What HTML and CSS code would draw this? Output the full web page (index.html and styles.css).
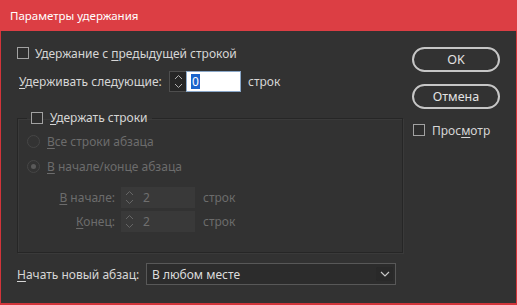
FILE: index.html
```html
<!DOCTYPE html>
<html lang="ru">
<head>
  <meta charset="UTF-8">
  <meta name="viewport" content="width=device-width, initial-scale=1.0">
  <title>Параметры удержания</title>
  <link rel="stylesheet" href="styles.css">
</head>
<body>
<div class="window">
  <div class="titlebar">Параметры удержания</div>

  <div class="content">
    <div class="main">
      <label class="row check-row">
        <span class="checkbox"></span>
        <span>Удержание с <u>п</u>редыдущей строкой</span>
      </label>

      <div class="row keep-row">
        <span class="keep-label"><u>У</u>держивать следующие:</span>
        <div class="spinner">
          <span class="arrows">
            <svg width="9" height="17" viewBox="0 0 9 17"><path d="M1 6 L4.5 2.5 L8 6 M1 11 L4.5 14.5 L8 11" fill="none" stroke="#b0b0b0" stroke-width="1"/></svg>
          </span>
          <span class="value"><span class="selected">0</span></span>
        </div>
        <span class="unit">строк</span>
      </div>

      <fieldset class="group">
        <legend class="legend">
          <span class="checkbox"></span>
          <span><u>У</u>держать строки</span>
        </legend>

        <div class="radio-row disabled">
          <span class="radio"></span>
          <span><u>В</u>се строки абзаца</span>
        </div>
        <div class="radio-row disabled second">
          <span class="radio on"></span>
          <span><u>В</u> начале/конце абзаца</span>
        </div>

        <div class="spin-row disabled first">
          <span class="spin-label"><u>В</u> начале:</span>
          <div class="spinner off">
            <span class="arrows">
              <svg width="9" height="17" viewBox="0 0 9 17"><path d="M1 6 L4.5 2.5 L8 6 M1 11 L4.5 14.5 L8 11" fill="none" stroke="#666" stroke-width="1"/></svg>
            </span>
            <span class="value">2</span>
          </div>
          <span class="unit">строк</span>
        </div>
        <div class="spin-row disabled">
          <span class="spin-label"><u>К</u>онец:</span>
          <div class="spinner off">
            <span class="arrows">
              <svg width="9" height="17" viewBox="0 0 9 17"><path d="M1 6 L4.5 2.5 L8 6 M1 11 L4.5 14.5 L8 11" fill="none" stroke="#666" stroke-width="1"/></svg>
            </span>
            <span class="value">2</span>
          </div>
          <span class="unit">строк</span>
        </div>
      </fieldset>

      <div class="row select-row">
        <span class="select-label"><u>Н</u>ачать новый абзац:</span>
        <div class="select">
          <span>В любом месте</span>
          <span class="chevron">
            <svg width="10" height="6" viewBox="0 0 10 6"><path d="M1 1 L5 5 L9 1" fill="none" stroke="#c8c8c8" stroke-width="1.2"/></svg>
          </span>
        </div>
      </div>
    </div>

    <div class="side">
      <button class="btn">OK</button>
      <button class="btn">Отмена</button>
      <label class="row preview">
        <span class="checkbox"></span>
        <span>Прос<u>м</u>отр</span>
      </label>
    </div>
  </div>
</div>
</body>
</html>
```

FILE: styles.css
```css
html, body {
  margin: 0;
  padding: 0;
  background: #323232;
}
.window {
  width: 517px;
  height: 305px;
  box-sizing: border-box;
  border: 1px solid #d2343a;
  border-top: none;
  border-bottom-width: 2px;
  background: #323232;
  font-family: "Noto Sans", "Open Sans", sans-serif;
  font-size: 12px;
  color: #d6d6d6;
  white-space: nowrap;
}
.titlebar {
  height: 31px;
  line-height: 31px;
  margin: 0 -1px;
  padding-left: 10px;
  background: #dc3e44;
  color: #fff;
  font-size: 11.5px;
}
u {
  text-decoration: underline;
  text-underline-offset: 2px;
}
.content {
  display: flex;
  padding: 13px 15px 0 16px;
}
.main {
  width: 386px;
}
.row {
  display: flex;
  align-items: center;
}
.check-row {
  height: 18px;
  gap: 6px;
}
.checkbox {
  width: 10px;
  height: 10px;
  border: 1px solid #a2a2a2;
  background: #2e2e2e;
  flex: none;
}
.keep-row {
  margin-top: 8px;
  height: 22px;
}
.keep-label {
  width: 150px;
  padding-left: 2px;
}
.spinner {
  display: flex;
  height: 21px;
  box-sizing: border-box;
}
.spinner .arrows {
  width: 17px;
  display: flex;
  align-items: center;
  justify-content: center;
  background: #262626;
  border: 1px solid #4e4e4e;
  border-right: none;
  box-sizing: border-box;
}
.spinner .value {
  width: 55px;
  background: #fff;
  border: 1px solid #8aa7c8;
  box-sizing: border-box;
  padding-left: 4px;
  display: flex;
  align-items: center;
  color: #000;
}
.selected {
  background: #1a64cc;
  color: #fff;
  padding: 0 1px;
  line-height: 15px;
}
.unit {
  margin-left: 7px;
}
.group {
  margin: 18px 0 0;
  padding: 0 0 0 9px;
  height: 143px;
  box-sizing: border-box;
  border: 1px solid #262626;
  box-shadow: 1px 1px 0 #3a3a3a, inset 1px 1px 0 #3a3a3a;
}
.legend {
  display: flex;
  align-items: center;
  gap: 7px;
  padding: 0 4px;
  line-height: 16px;
  margin-left: 0;
}
.disabled {
  color: #6c6c6c;
}
.radio-row {
  display: flex;
  align-items: center;
  gap: 7px;
  height: 20px;
  margin-top: 5px;
}
.radio {
  width: 11px;
  height: 11px;
  border: 1px solid #464646;
  border-radius: 50%;
  background: #333;
  position: relative;
  flex: none;
}
.radio.on::after {
  content: "";
  position: absolute;
  left: 3px;
  top: 3px;
  width: 5px;
  height: 5px;
  border-radius: 50%;
  background: #5a5a5a;
}
.spin-row {
  display: flex;
  align-items: center;
  height: 21px;
  margin-top: 3px;
}
.spin-row.first {
  margin-top: 11px;
}
.spin-label {
  width: 88px;
  text-align: right;
}
.spinner.off {
  margin-left: 6px;
  width: 74px;
  background: #393939;
}
.spinner.off .arrows {
  width: 16px;
  background: transparent;
  border: none;
}
.spinner.off .value {
  flex: 1;
  background: transparent;
  border: none;
  color: #6f6f6f;
  padding-left: 6px;
}
.spin-row .unit {
  margin-left: 8px;
}
.select-row {
  margin-top: 10px;
  height: 22px;
}
.select-label {
  width: 129px;
}
.select {
  width: 250px;
  height: 22px;
  box-sizing: border-box;
  border: 1px solid #585858;
  background: #2c2c2c;
  display: flex;
  align-items: center;
  justify-content: space-between;
  padding: 0 2px 0 5px;
  color: #dcdcdc;
}
.chevron {
  width: 17px;
  height: 14px;
  display: flex;
  align-items: center;
  justify-content: center;
  background: #292929;
  border-radius: 2px;
}
.side {
  margin-left: 9px;
  width: 88px;
  padding-top: 3px;
  display: flex;
  flex-direction: column;
}
.btn {
  height: 25px;
  border: 2px solid #c6c6c6;
  border-radius: 13px;
  background: transparent;
  color: #e2e2e2;
  font-family: inherit;
  font-size: 12.5px;
  padding: 0;
}
.btn + .btn {
  margin-top: 12px;
}
.preview {
  margin-top: 13px;
  height: 16px;
  gap: 7px;
  padding-left: 1px;
}
```
